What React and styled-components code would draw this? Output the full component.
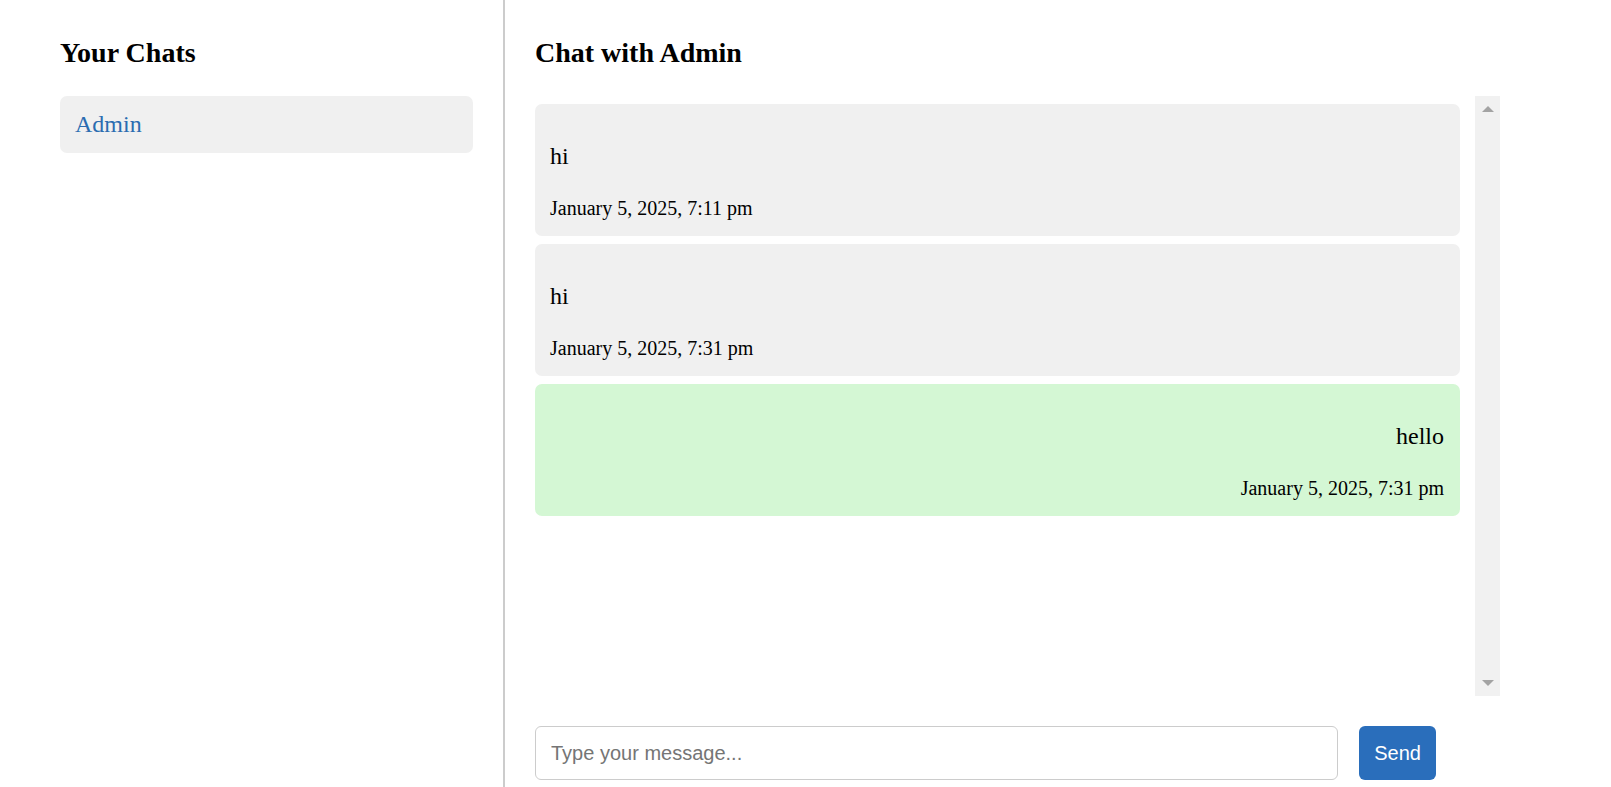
import React from "react";
import styled, { createGlobalStyle } from "styled-components";

const GlobalStyle = createGlobalStyle`
  html, body { margin: 0; padding: 0; }
  body {
    font-family: "Liberation Serif", "Times New Roman", serif;
    color: #000;
    background: #fff;
  }
  * { box-sizing: border-box; }
`;

const Page = styled.div`
  display: flex;
  height: 100vh;
  overflow: hidden;
`;

const Sidebar = styled.aside`
  width: 505px;
  flex: 0 0 505px;
  border-right: 2px solid #cccccc;
  padding: 0 30px 0 60px;
`;

const Heading = styled.h2`
  font-size: 28px;
  line-height: 33px;
  font-weight: bold;
  margin: 36px 0 27px;
`;

const ChatItem = styled.div`
  background: #f0f0f0;
  border-radius: 7px;
  padding: 14px 15px 14px;
  font-size: 24px;
  line-height: 29px;
  color: #2b6cb0;
  cursor: pointer;
`;

const Main = styled.main`
  flex: 1;
  display: flex;
  flex-direction: column;
  padding: 0 111px 7px 30px;
  min-width: 0;
`;

const ScrollArea = styled.div`
  flex: 1;
  min-height: 0;
  display: flex;
`;

const Messages = styled.div`
  flex: 1;
  min-width: 0;
  overflow-y: auto;
  padding: 8px 15px 0 0;
`;

const ScrollTrack = styled.div`
  width: 25px;
  flex: 0 0 25px;
  background: #f1f1f1;
  display: flex;
  flex-direction: column;
  justify-content: space-between;
  align-items: center;
`;

const Arrow = styled.div`
  width: 0;
  height: 0;
  border-left: 6px solid transparent;
  border-right: 6px solid transparent;
  ${(p) =>
    p.$down
      ? "border-top: 6px solid #a3a3a3; margin-bottom: 10px;"
      : "border-bottom: 6px solid #a3a3a3; margin-top: 10px;"}
`;

const Bubble = styled.div`
  background: ${(p) => (p.$mine ? "#d4f7d4" : "#f0f0f0")};
  text-align: ${(p) => (p.$mine ? "right" : "left")};
  border-radius: 7px;
  padding: 12px 16px 16px 15px;
  margin-bottom: 8px;
`;

const MessageText = styled.p`
  font-size: 24px;
  line-height: 29px;
  margin: 26px 0 26px;
`;

const Timestamp = styled.div`
  font-size: 20px;
  line-height: 23px;
`;

const Composer = styled.form`
  display: flex;
  gap: 21px;
  margin-top: 30px;
  padding-right: 64px;
`;

const Input = styled.input`
  flex: 1;
  height: 54px;
  border: 1px solid #cccccc;
  border-radius: 6px;
  padding: 0 15px;
  font-family: "Liberation Sans", Arial, sans-serif;
  font-size: 20px;
  color: #000;
  outline: none;
  &::placeholder { color: #757575; }
`;

const SendButton = styled.button`
  height: 54px;
  padding: 0 15px;
  border: none;
  border-radius: 6px;
  background: #2a6ebb;
  color: #fff;
  font-family: "Liberation Sans", Arial, sans-serif;
  font-size: 20px;
  cursor: pointer;
`;

const messages = [
  { id: 1, text: "hi", time: "January 5, 2025, 7:11 pm", mine: false },
  { id: 2, text: "hi", time: "January 5, 2025, 7:31 pm", mine: false },
  { id: 3, text: "hello", time: "January 5, 2025, 7:31 pm", mine: true },
];

export default function App() {
  return (
    <>
      <GlobalStyle />
      <Page>
        <Sidebar>
          <Heading>Your Chats</Heading>
          <ChatItem>Admin</ChatItem>
        </Sidebar>
        <Main>
          <Heading>Chat with Admin</Heading>
          <ScrollArea>
            <Messages>
              {messages.map((m) => (
                <Bubble key={m.id} $mine={m.mine}>
                  <MessageText>{m.text}</MessageText>
                  <Timestamp>{m.time}</Timestamp>
                </Bubble>
              ))}
            </Messages>
            <ScrollTrack aria-hidden="true">
              <Arrow />
              <Arrow $down />
            </ScrollTrack>
          </ScrollArea>
          <Composer onSubmit={(e) => e.preventDefault()}>
            <Input placeholder="Type your message..." />
            <SendButton type="submit">Send</SendButton>
          </Composer>
        </Main>
      </Page>
    </>
  );
}
